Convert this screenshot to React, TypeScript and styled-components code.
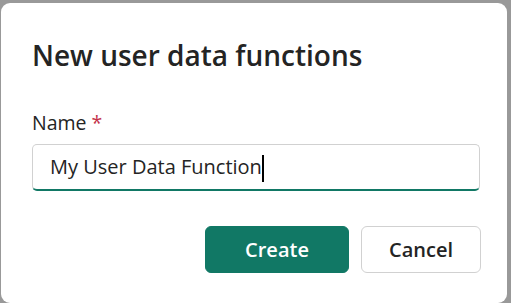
import { FC } from 'react';
import { styled, createGlobalStyle } from 'styled-components';

const GlobalStyle = createGlobalStyle`
  html, body {
    margin: 0;
    padding: 0;
    background: #999999;
    font-family: "Open Sans", "Noto Sans", Arial, sans-serif;
  }
  * {
    box-sizing: border-box;
  }
`;

const App: FC = () => {
  return (
    <>
      <GlobalStyle />
      <SBackdrop>
        <SDialog>
          <STitle>New user data functions</STitle>
          <SField>
            <SLabel>
              Name <SRequired>*</SRequired>
            </SLabel>
            <SInput>
              My User Data Function
              <SCaret />
            </SInput>
          </SField>
          <SActions>
            <SButton $primary>Create</SButton>
            <SButton>Cancel</SButton>
          </SActions>
        </SDialog>
      </SBackdrop>
    </>
  );
};

const SBackdrop = styled.div`
  width: 511px;
  height: 303px;
  padding: 3px 0 0 1px;
  overflow: hidden;
`;

const SDialog = styled.div`
  width: 506px;
  height: 300px;
  background: #ffffff;
  border-radius: 9px;
  padding: 34px 26px 0 31px;
  display: flex;
  flex-direction: column;
`;

const STitle = styled.h2`
  margin: 0;
  font-size: 28px;
  line-height: 36px;
  font-weight: 600;
  color: #242424;
`;

const SField = styled.div`
  margin-top: 36px;
  display: flex;
  flex-direction: column;
  gap: 7px;
`;

const SLabel = styled.label`
  font-size: 19.5px;
  line-height: 28px;
  color: #242424;
`;

const SRequired = styled.span`
  color: #c4314b;
`;

const SInput = styled.div`
  height: 47px;
  margin-right: 1px;
  padding: 8px 17px;
  border: 1px solid #d1d1d1;
  border-bottom: 2px solid #117865;
  border-radius: 5px;
  font-size: 20px;
  line-height: 28px;
  color: #242424;
  display: flex;
  align-items: center;
`;

const SCaret = styled.span`
  display: inline-block;
  width: 2px;
  height: 27px;
  margin-left: 0;
  margin-top: 2px;
  background: #000000;
`;

const SActions = styled.div`
  margin-top: 35px;
  display: flex;
  justify-content: flex-end;
  gap: 12px;
`;

const SButton = styled.button<{ $primary?: boolean }>`
  width: ${(p) => (p.$primary ? '144px' : '120px')};
  height: 47px;
  border-radius: 6px;
  border: 1px solid ${(p) => (p.$primary ? '#117865' : '#d1d1d1')};
  background: ${(p) => (p.$primary ? '#117865' : '#ffffff')};
  color: ${(p) => (p.$primary ? '#ffffff' : '#242424')};
  font-family: inherit;
  font-size: 20px;
  font-weight: 600;
  display: flex;
  align-items: center;
  justify-content: center;
  padding: 0;
  cursor: pointer;
`;

export default App;
